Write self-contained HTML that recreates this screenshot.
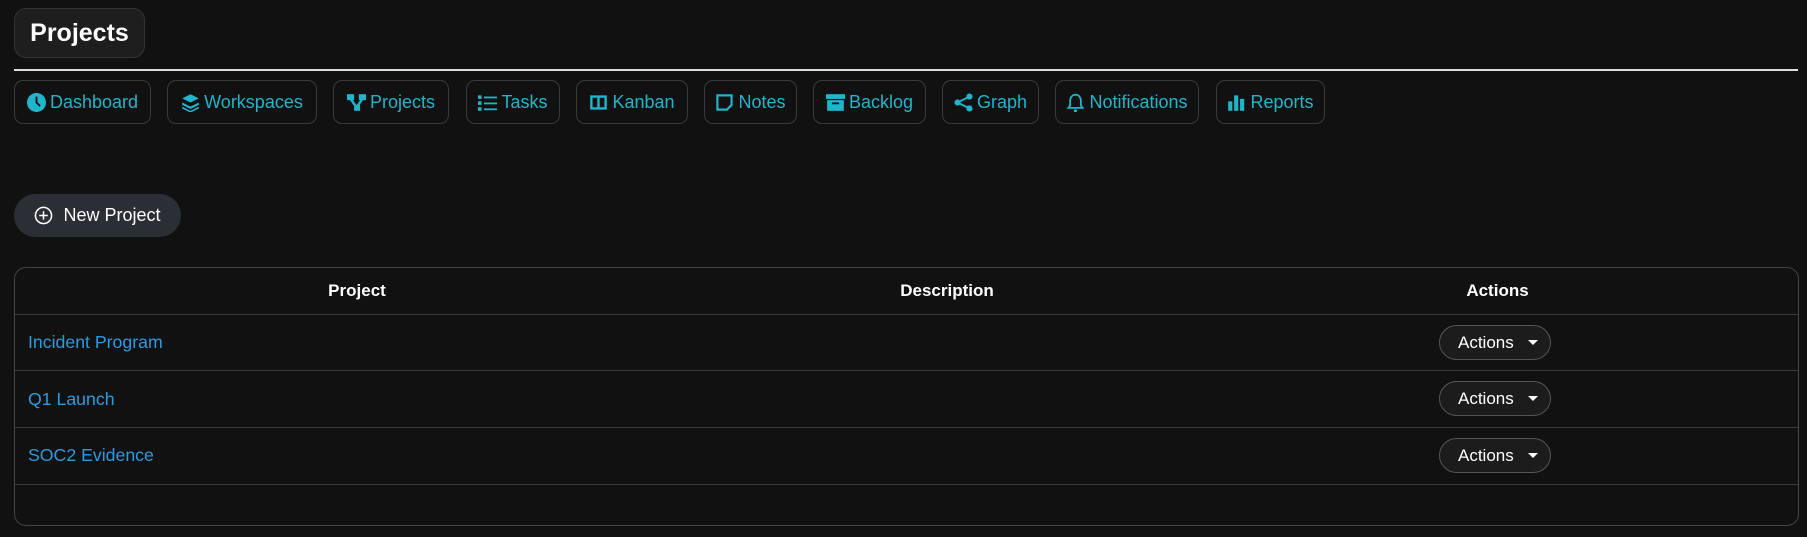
<!DOCTYPE html>
<html><head><meta charset="utf-8"><style>
*{box-sizing:border-box;margin:0;padding:0}
body{width:1807px;height:537px;background:#111;font-family:"Liberation Sans",sans-serif;color:#fff;position:relative;overflow:hidden}
.title{position:absolute;left:14px;top:8px;width:131px;height:50px;background:#1e1e1e;border:1px solid #333;border-radius:12px;font-weight:bold;font-size:25px;line-height:48px;text-align:center}
.hr{position:absolute;left:14px;top:69px;width:1784px;height:2px;background:#ddd}
.nav{position:absolute;top:80px;height:44px;border:1px solid #3a3a3a;border-radius:9px;color:#1fb5cc;font-size:18px;line-height:42px;display:flex;align-items:center;justify-content:center;gap:4px}
.nav svg{width:19px;height:19px;fill:#1fb5cc}
.np{position:absolute;left:14px;top:194px;width:167px;height:43px;background:#2b2f35;border-radius:22px;font-size:18px;display:flex;align-items:center;justify-content:center;gap:10px}
.tbl{position:absolute;left:14px;top:267px;width:1785px;height:259px;border:1px solid #444;border-radius:12px}
.th{position:absolute;top:0;height:45px;line-height:45px;font-weight:bold;font-size:17px;text-align:center}
.line{position:absolute;left:0;width:100%;height:1px;background:#3b3b3b}
.lnk{position:absolute;left:13px;color:#2a9be0;font-size:17.7px}
.act{position:absolute;left:1424px;width:112px;height:35px;border:1px solid #555;border-radius:18px;background:#1c1c1c;font-size:17px;line-height:33px;padding-left:18px}
.act:after{content:"";position:absolute;left:88px;top:14px;border-left:5px solid transparent;border-right:5px solid transparent;border-top:5px solid #fff}
</style></head><body>
<div class="title">Projects</div>
<div class="hr"></div>
<div class="nav" style="left:14px;width:137px"><svg viewBox="0 0 16 16"><circle cx="8" cy="8" r="8"/><path d="M8 3v5l3 3" stroke="#111" stroke-width="1.6" fill="none"/></svg>Dashboard</div>
<div class="nav" style="left:167px;width:150px"><svg viewBox="0 0 16 16"><path d="M8 1l7 3.5-7 3.5-7-3.5z M1 8l7 3.5L15 8v2L8 13.5 1 10z M1 11.5L8 15l7-3.5v1.5L8 16.5 1 13z"/></svg>Workspaces</div>
<div class="nav" style="left:333px;width:116px"><svg viewBox="0 0 16 16"><rect x="0" y="1" width="6" height="5"/><rect x="10" y="1" width="6" height="5"/><rect x="6" y="10" width="5" height="5"/><path d="M3 5l5 7M13 5l-5 7" stroke="#1fb5cc" stroke-width="2"/></svg>Projects</div>
<div class="nav" style="left:466px;width:94px"><svg viewBox="0 0 16 16"><rect x="0" y="2" width="3" height="3"/><rect x="0" y="7" width="3" height="3"/><rect x="0" y="12" width="3" height="3"/><rect x="5" y="3" width="11" height="1.5"/><rect x="5" y="8" width="11" height="1.5"/><rect x="5" y="13" width="11" height="1.5"/></svg>Tasks</div>
<div class="nav" style="left:576px;width:112px"><svg viewBox="0 0 16 16"><path d="M1 2h14v12H1z M3 4v8h4V4z M9 4v8h4V4z" fill-rule="evenodd"/></svg>Kanban</div>
<div class="nav" style="left:704px;width:93px"><svg viewBox="0 0 16 16"><path d="M2 2h12v8l-4 4H2z" fill="none" stroke="#1fb5cc" stroke-width="1.8"/></svg>Notes</div>
<div class="nav" style="left:813px;width:113px"><svg viewBox="0 0 16 16"><rect x="0" y="1" width="16" height="4"/><path d="M1 6h14v9H1z M5 8v1.5h6V8z" fill-rule="evenodd"/></svg>Backlog</div>
<div class="nav" style="left:942px;width:97px"><svg viewBox="0 0 16 16"><circle cx="13" cy="3" r="2.6"/><circle cx="3" cy="8" r="2.6"/><circle cx="13" cy="13" r="2.6"/><path d="M3 8L13 3M3 8l10 5" stroke="#1fb5cc" stroke-width="1.6"/></svg>Graph</div>
<div class="nav" style="left:1055px;width:144px"><svg viewBox="0 0 16 16"><path d="M8 1.5c3 0 4.5 2.5 4.5 5v4l1.5 2H2l1.5-2v-4c0-2.5 1.5-5 4.5-5z" fill="none" stroke="#1fb5cc" stroke-width="1.5"/><circle cx="8" cy="15" r="1.3"/></svg>Notifications</div>
<div class="nav" style="left:1216px;width:109px"><svg viewBox="0 0 16 16"><rect x="1" y="7" width="3.5" height="8"/><rect x="6" y="2" width="3.5" height="13"/><rect x="11" y="5" width="3.5" height="10"/></svg>Reports</div>
<div class="np"><svg width="19" height="19" viewBox="0 0 20 20"><circle cx="10" cy="10" r="8.5" fill="none" stroke="#fff" stroke-width="1.6"/><path d="M10 5.5v9M5.5 10h9" stroke="#fff" stroke-width="1.6"/></svg>New Project</div>
<div class="tbl">
<div class="th" style="left:0;width:684px">Project</div>
<div class="th" style="left:684px;width:496px">Description</div>
<div class="th" style="left:1180px;width:605px">Actions</div>
<div class="line" style="top:46px"></div>
<div class="line" style="top:102px"></div>
<div class="line" style="top:159px"></div>
<div class="line" style="top:216px"></div>
<div class="lnk" style="top:64px">Incident Program</div>
<div class="lnk" style="top:121px">Q1 Launch</div>
<div class="lnk" style="top:177px">SOC2 Evidence</div>
<div class="act" style="top:57px">Actions</div>
<div class="act" style="top:113px">Actions</div>
<div class="act" style="top:170px">Actions</div>
</div>
</body></html>
